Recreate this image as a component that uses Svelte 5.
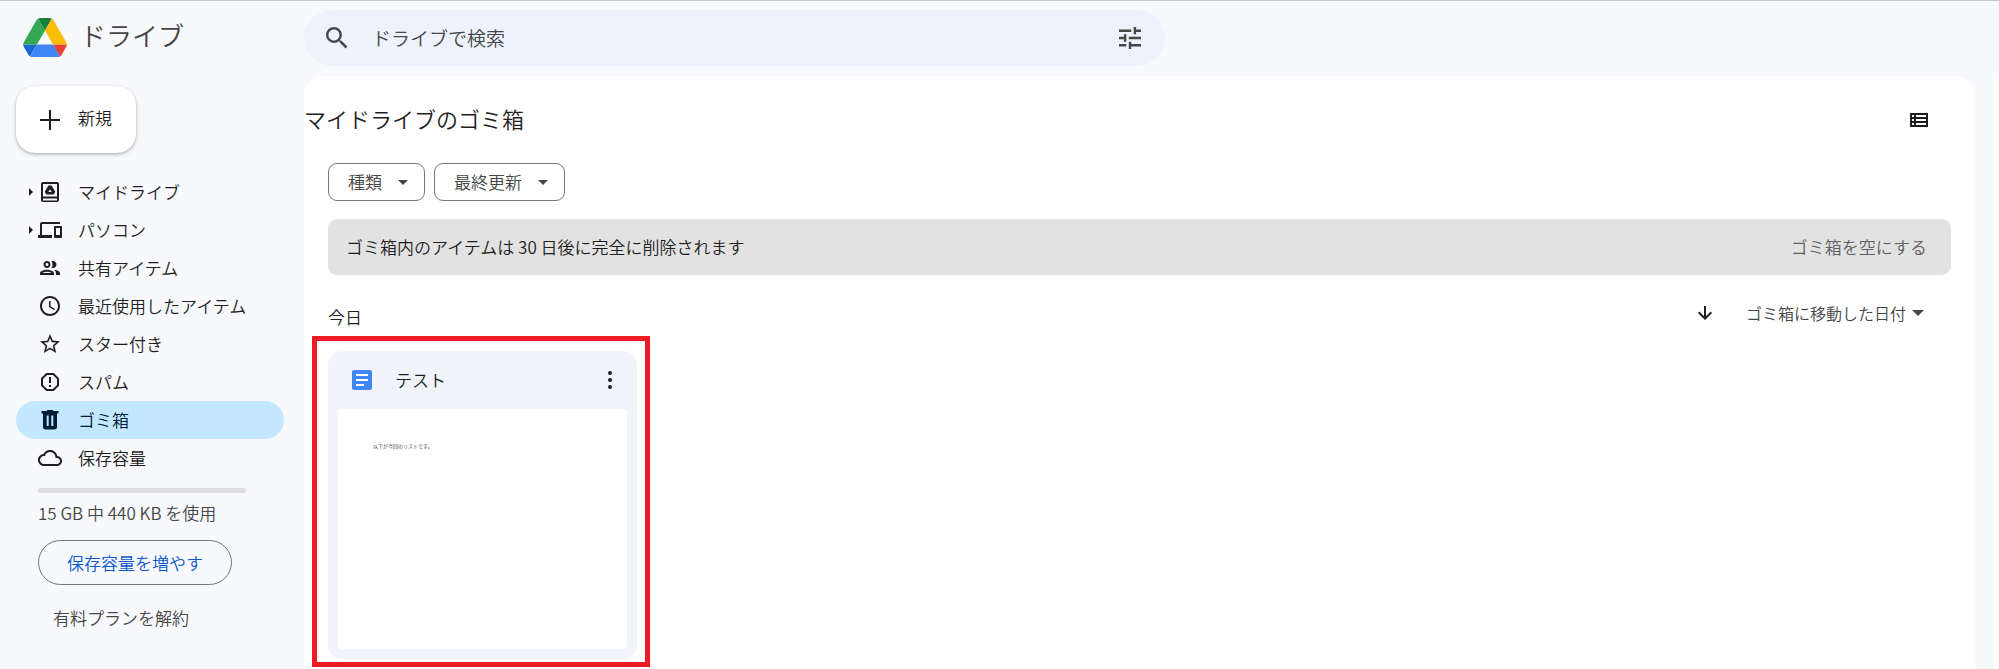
<script lang="ts">
  type NavItem = {
    icon: string;
    label: string;
    expandable?: boolean;
    active?: boolean;
  };

  const navItems: NavItem[] = [
    { icon: "drive", label: "マイドライブ", expandable: true },
    { icon: "devices", label: "パソコン", expandable: true },
    { icon: "people", label: "共有アイテム" },
    { icon: "clock", label: "最近使用したアイテム" },
    { icon: "star", label: "スター付き" },
    { icon: "spam", label: "スパム" },
    { icon: "trash", label: "ゴミ箱", active: true },
    { icon: "cloud", label: "保存容量" },
  ];

  const icons: Record<string, string> = {
    drive:
      "M19 2H5C3.900 2 3 2.900 3 4v16c0 1.100.9 2 2 2h14c1.100 0 2-.9 2-2V4c0-1.100-.9-2-2-2zm0 18.500H5v-2h14v2zm0-4H5V4h14v12.500zM13.600 5.500h-3.200L6.700 11.800l1.600 2.800h7.400l1.600-2.800zM10.400 12 12 9.200l1.600 2.800z",
    devices:
      "M4 6h18V4H4c-1.100 0-2 .9-2 2v11H0v3h14v-3H4V6zm19 2h-6c-.55 0-1 .45-1 1v10c0 .55.45 1 1 1h6c.55 0 1-.45 1-1V9c0-.55-.45-1-1-1zm-1 9h-4v-7h4v7z",
    people:
      "M9 13.750c-2.340 0-7 1.170-7 3.500V19h14v-1.750c0-2.330-4.660-3.500-7-3.500zM4.340 17c.84-.58 2.870-1.250 4.660-1.250s3.820.67 4.660 1.250H4.340zM9 12c1.930 0 3.500-1.570 3.500-3.500S10.930 5 9 5 5.500 6.570 5.500 8.500 7.070 12 9 12zm0-5c.83 0 1.500.67 1.500 1.500S9.830 10 9 10s-1.500-.67-1.500-1.500S8.170 7 9 7zm7.040 6.810c1.160.84 1.960 1.960 1.960 3.440V19h4v-1.750c0-2.020-3.500-3.170-5.960-3.440zM15 12c1.930 0 3.500-1.570 3.500-3.500S16.930 5 15 5c-.54 0-1.040.13-1.500.35.63.89 1 1.980 1 3.150s-.37 2.260-1 3.150c.46.22.96.35 1.500.35z",
    clock:
      "M11.990 2C6.470 2 2 6.480 2 12s4.470 10 9.990 10C17.520 22 22 17.520 22 12S17.520 2 11.990 2zM12 20c-4.420 0-8-3.580-8-8s3.580-8 8-8 8 3.580 8 8-3.580 8-8 8zm.5-13H11v6l5.250 3.150.75-1.230-4.500-2.670z",
    star: "m22 9.240-7.190-.62L12 2 9.190 8.630 2 9.240l5.460 4.730L5.820 21 12 17.270 18.180 21l-1.630-7.030L22 9.240zM12 15.400l-3.760 2.270 1-4.280-3.320-2.880 4.380-.38L12 6.100l1.710 4.040 4.380.38-3.320 2.880 1 4.280L12 15.400z",
    spam: "M15.730 3H8.270L3 8.270v7.460L8.270 21h7.460L21 15.730V8.270L15.730 3zM19 14.900 14.900 19H9.100L5 14.900V9.100L9.100 5h5.800L19 9.100v5.800zM11 7h2v6h-2zM11 15h2v2h-2z",
    trash:
      "M15 3V2H9v1H3.500v2.500H5V19c0 1.500 1 2.500 2.500 2.500h9c1.500 0 2.500-1 2.500-2.500V5.500h1.500V3zM8.700 7.500h2V18h-2zM13.300 7.500h2V18h-2z",
    cloud:
      "M19.350 10.040C18.670 6.590 15.640 4 12 4 9.110 4 6.600 5.640 5.350 8.040 2.340 8.360 0 10.910 0 14c0 3.310 2.690 6 6 6h13c2.760 0 5-2.240 5-5 0-2.640-2.050-4.780-4.650-4.960zM19 18H6c-2.210 0-4-1.790-4-4s1.790-4 4-4h.71C7.370 7.690 9.480 6 12 6c3.040 0 5.500 2.460 5.500 5.500v.5H19c1.660 0 3 1.340 3 3s-1.340 3-3 3z",
  };

  const chips = ["種類", "最終更新"];
</script>

{#snippet caret(size: number)}
  <svg viewBox="0 0 10 5" width={size} height={size / 2} aria-hidden="true">
    <path d="M0 0h10L5 5z" />
  </svg>
{/snippet}

<div class="app">
  <aside class="sidebar">
    <a class="brand" href="#home">
      <svg viewBox="0 0 87.3 78" width="44" height="39" aria-hidden="true">
        <path fill="#1967d2" d="m6.600 66.850 3.850 6.650c.8 1.400 1.950 2.500 3.300 3.300l13.750-23.800h-27.500c0 1.550.4 3.100 1.200 4.500z" />
        <path fill="#34a853" d="m43.650 25-13.750-23.800c-1.350.8-2.500 1.900-3.300 3.300l-25.400 44a9.060 9.060 0 0 0-1.200 4.500h27.500z" />
        <path fill="#ea4335" d="m73.550 76.800c1.350-.8 2.500-1.900 3.300-3.300l1.600-2.750 7.650-13.250c.8-1.400 1.200-2.950 1.200-4.500h-27.500l5.850 11.500z" />
        <path fill="#188038" d="m43.650 25 13.750-23.800c-1.350-.8-2.900-1.200-4.500-1.200h-18.500c-1.600 0-3.150.45-4.500 1.200z" />
        <path fill="#4285f4" d="m59.800 53h-32.300l-13.750 23.800c1.350.8 2.900 1.200 4.500 1.200h50.800c1.600 0 3.150-.45 4.500-1.200z" />
        <path fill="#fbbc04" d="m73.400 26.500-12.700-22c-.8-1.400-1.950-2.500-3.300-3.300l-13.750 23.800 16.150 28h27.450c0-1.550-.4-3.100-1.200-4.500z" />
      </svg>
      <span>ドライブ</span>
    </a>

    <button type="button" class="new">
      <svg viewBox="0 0 20 20" width="20" height="20" aria-hidden="true">
        <path d="M9 0h2v9h9v2h-9v9H9v-9H0V9h9z" />
      </svg>
      <span>新規</span>
    </button>

    <nav>
      {#each navItems as item}
        <a class="nav-item" class:active={item.active} href="#{item.icon}">
          <span class="expander">
            {#if item.expandable}
              <svg viewBox="0 0 4 8" width="4" height="8" aria-hidden="true">
                <path d="M0 0l4 4-4 4z" />
              </svg>
            {/if}
          </span>
          <svg viewBox="0 0 24 24" width="24" height="24" aria-hidden="true">
            <path fill-rule="evenodd" d={icons[item.icon]} />
          </svg>
          <span>{item.label}</span>
        </a>
      {/each}
    </nav>

    <div class="storage">
      <div class="meter"></div>
      <p>15 GB 中 440 KB を使用</p>
      <button type="button" class="upgrade">保存容量を増やす</button>
      <a class="cancel" href="#plan">有料プランを解約</a>
    </div>
  </aside>

  <div class="content">
    <form class="search">
      <svg viewBox="3 3 18 18" width="22" height="22" aria-hidden="true">
        <path d="M15.500 14h-.79l-.28-.27A6.470 6.470 0 0 0 16 9.500 6.500 6.500 0 1 0 9.500 16c1.610 0 3.090-.59 4.230-1.570l.27.28v.79l5 4.990L20.490 19l-4.990-5zm-6 0C7.010 14 5 11.990 5 9.500S7.010 5 9.500 5 14 7.010 14 9.500 11.990 14 9.500 14z" />
      </svg>
      <input type="text" placeholder="ドライブで検索" aria-label="ドライブで検索" />
      <button type="button" class="icon-button" aria-label="検索オプション">
        <svg viewBox="3 3 18 18" width="22" height="22" aria-hidden="true">
          <path d="M3 17v2h6v-2H3zM3 5v2h10V5H3zm10 16v-2h8v-2h-8v-2h-2v6h2zM7 9v2H3v2h4v2h2V9H7zm14 4v-2H11v2h10zm-6-4h2V7h4V5h-4V3h-2v6z" />
        </svg>
      </button>
    </form>

    <div class="panels">
      <main>
        <header>
          <h1>マイドライブのゴミ箱</h1>
          <button type="button" class="icon-button" aria-label="リスト表示">
            <svg viewBox="0 0 18 14" width="18" height="14" aria-hidden="true">
              <path fill-rule="evenodd" d="M0 0h18v14H0zM2 2v2h2V2zM6 2v2h10V2zM2 6v2h2V6zM6 6v2h10V6zM2 10v2h2v-2zM6 10v2h10v-2z" />
            </svg>
          </button>
        </header>

        <div class="chips">
          {#each chips as chip}
            <button type="button" class="chip">{chip}{@render caret(10)}</button>
          {/each}
        </div>

        <div class="banner">
          <span>ゴミ箱内のアイテムは 30 日後に完全に削除されます</span>
          <button type="button">ゴミ箱を空にする</button>
        </div>

        <div class="section">
          <h2>今日</h2>
          <button type="button" class="icon-button" aria-label="並べ替えの方向">
            <svg viewBox="0 0 14 14" width="14" height="14" aria-hidden="true">
              <path d="M6 0h2v10.200l4.600-4.600L14 7l-7 7-7-7 1.400-1.400L6 10.200z" />
            </svg>
          </button>
          <button type="button" class="sort">ゴミ箱に移動した日付{@render caret(12)}</button>
        </div>

        <article class="file">
          <div class="file-head">
            <svg viewBox="0 0 20 20" width="20" height="20" aria-hidden="true">
              <rect width="20" height="20" rx="2" fill="#4285f4" />
              <path fill="#fff" d="M4 4h12v2H4zM4 9h12v2H4zM4 14h8v2H4z" />
            </svg>
            <h3>テスト</h3>
            <button type="button" class="icon-button" aria-label="その他の操作">
              <svg viewBox="0 0 4 18" width="4" height="18" aria-hidden="true">
                <circle cx="2" cy="2" r="2" />
                <circle cx="2" cy="9" r="2" />
                <circle cx="2" cy="16" r="2" />
              </svg>
            </button>
          </div>
          <div class="preview">以下が今回のリストです。</div>
        </article>
      </main>
      <div class="side-panel"></div>
    </div>
  </div>
</div>

<style>
  :global(body) {
    background: #f8f9fd;
  }
  .app {
    display: flex;
    box-sizing: border-box;
    min-height: 100vh;
    border-top: 1px solid #c8c9cb;
    font-family: "Noto Sans CJK JP", sans-serif;
    font-size: 17px;
    font-weight: 350;
    line-height: 24px;
    color: #1f1f1f;
  }
  .app * {
    box-sizing: border-box;
  }
  svg {
    flex-shrink: 0;
    fill: currentColor;
  }
  a {
    color: inherit;
    text-decoration: none;
  }
  button,
  input {
    padding: 0;
    border: 0;
    background: none;
    color: inherit;
    font: inherit;
  }
  button {
    cursor: pointer;
  }
  h1,
  h2,
  h3,
  p {
    margin: 0;
    font-weight: inherit;
  }
  .icon-button {
    display: flex;
  }

  .sidebar {
    flex: 0 0 304px;
    padding: 16px 20px 0 16px;
  }
  .brand {
    display: flex;
    align-items: center;
    gap: 13px;
    height: 40px;
    padding-left: 7px;
    font-size: 26px;
    color: #444746;
  }
  .brand span,
  .new span,
  h1 {
    padding-bottom: 4px;
  }
  .new {
    display: flex;
    align-items: center;
    gap: 18px;
    height: 67px;
    margin-top: 29px;
    padding: 0 24px;
    border-radius: 19px;
    background: #fff;
    box-shadow: 0 1px 3px rgba(60, 64, 67, 0.3), 0 2px 4px rgba(60, 64, 67, 0.15);
  }
  nav {
    margin-top: 20px;
  }
  .nav-item {
    display: flex;
    align-items: center;
    height: 38px;
    padding-left: 12px;
    border-radius: 19px;
  }
  .nav-item > svg {
    margin-right: 16px;
  }
  .nav-item.active {
    background: #c2e7ff;
    color: #001d35;
  }
  .expander {
    display: flex;
    width: 10px;
  }
  .expander svg {
    margin-left: 1px;
  }
  .storage {
    display: flex;
    flex-direction: column;
    align-items: flex-start;
    padding: 11px 22px 0;
    color: #444746;
  }
  .meter {
    width: 100%;
    max-width: 208px;
    height: 5px;
    border-radius: 3px;
    background: #dddddf;
  }
  .storage p {
    margin-top: 8px;
  }
  .upgrade {
    height: 45px;
    margin-top: 15px;
    padding: 0 28px;
    border: 1px solid #747775;
    border-radius: 23px;
    color: #0b57d0;
    white-space: nowrap;
  }
  .cancel {
    margin: 21px 0 0 15px;
  }

  .content {
    display: flex;
    flex: 1;
    flex-direction: column;
    min-width: 0;
    padding-top: 9px;
  }
  .search {
    display: flex;
    align-items: center;
    gap: 24px;
    width: 100%;
    max-width: 861px;
    height: 56px;
    padding: 0 24px 0 22px;
    border-radius: 28px;
    background: #edf2fc;
    font-size: 19px;
    color: #444746;
  }
  .search input {
    flex: 1;
    min-width: 0;
    outline: 0;
  }
  .search input::placeholder {
    color: #444746;
    opacity: 1;
  }
  .panels {
    display: flex;
    flex: 1;
    gap: 19px;
    margin-top: 10px;
  }
  main {
    flex: 1;
    min-width: 0;
    padding: 25px 24px 0;
    border-radius: 19px 19px 0 0;
    background: #fff;
  }
  .side-panel {
    width: 5px;
    border-radius: 19px 0 0 0;
    background: #fff;
  }
  header {
    display: flex;
    align-items: center;
    justify-content: space-between;
    height: 38px;
    margin-left: -24px;
    padding-right: 23px;
  }
  h1 {
    font-size: 22px;
  }
  .chips {
    display: flex;
    gap: 9px;
    margin-top: 24px;
  }
  .chip {
    display: flex;
    align-items: center;
    gap: 16px;
    height: 38px;
    padding: 0 16px 0 19px;
    border: 1px solid #747775;
    border-radius: 9px;
    color: #444746;
  }
  .banner {
    display: flex;
    align-items: center;
    justify-content: space-between;
    height: 56px;
    margin-top: 18px;
    padding: 0 24px 0 18px;
    border-radius: 9px;
    background: #e2e2e2;
  }
  .banner button {
    color: #5f6161;
  }
  .section {
    display: flex;
    align-items: center;
    height: 38px;
    margin-top: 19px;
    padding-right: 27px;
  }
  .section h2 {
    flex: 1;
    padding-top: 8px;
    font-size: 17px;
  }
  .sort {
    display: flex;
    align-items: center;
    gap: 6px;
    margin-left: 34px;
    font-size: 16px;
    color: #444746;
  }
  .file {
    position: relative;
    width: 309px;
    margin-top: 19px;
    padding: 0 10px 10px;
    border-radius: 14px;
    background: #f1f5fb;
  }
  /* highlight frame around the card */
  .file::after {
    content: "";
    position: absolute;
    inset: -15px -13px -8px -16px;
    border: 5px solid #ed1c24;
    pointer-events: none;
  }
  .file-head {
    display: flex;
    align-items: center;
    height: 58px;
    padding: 0 15px 0 14px;
  }
  .file-head h3 {
    flex: 1;
    margin-left: 23px;
    font-size: 17px;
  }
  .preview {
    height: 240px;
    padding: 25px 35px;
    border-radius: 4px;
    background: #fff;
    font-size: 5px;
    color: #1f1f1f;
  }
</style>
